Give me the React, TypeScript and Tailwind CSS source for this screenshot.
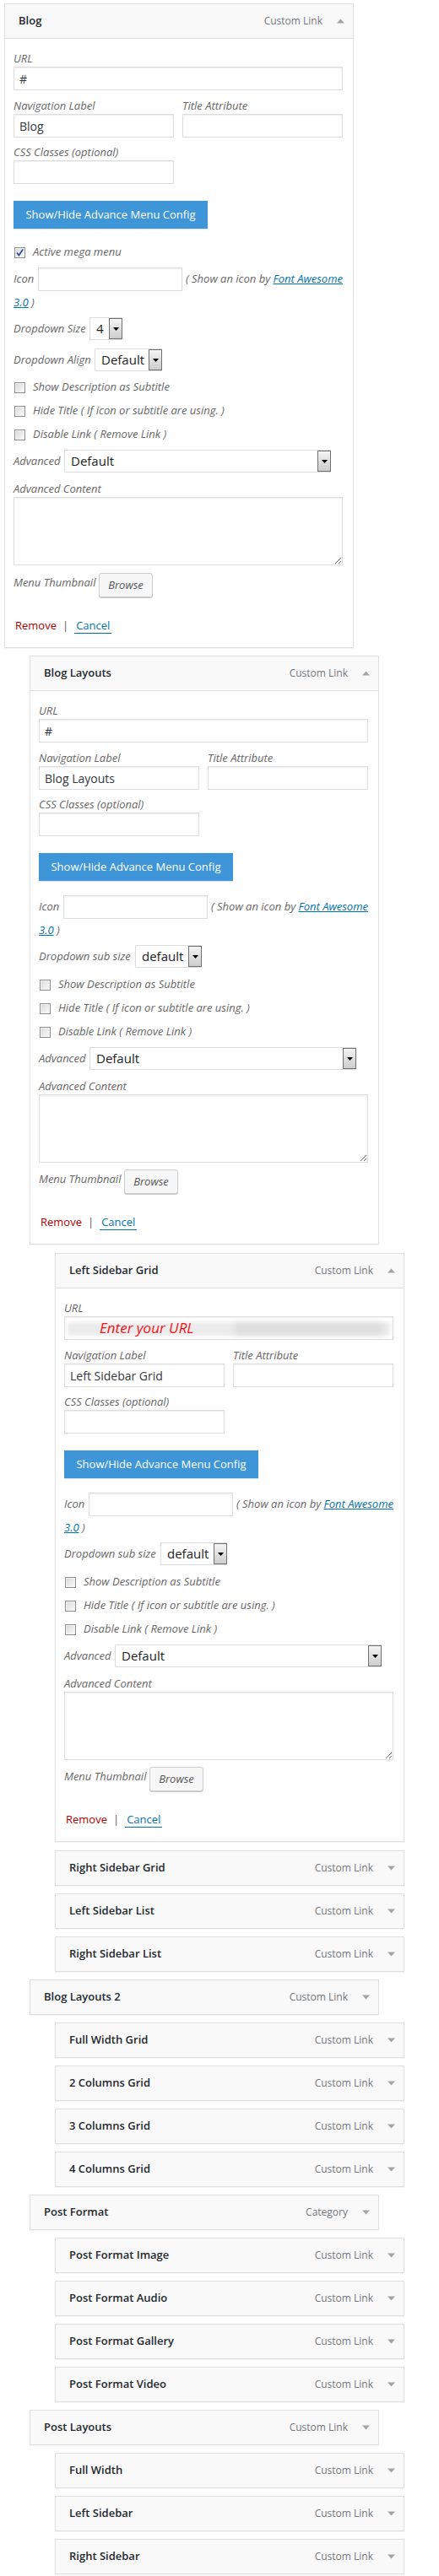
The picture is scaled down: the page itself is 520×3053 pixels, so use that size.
import React from "react";

const ML = ["ml-[5px]", "ml-[35px]", "ml-[65px]"];

function Arrow({ up }: { up?: boolean }) {
  return (
    <svg width="9" height="6" viewBox="0 0 9 6" className="block">
      {up ? <path d="M0 5.5h9L4.5 0.5z" fill="#a0a5aa" /> : <path d="M0 0.5h9L4.5 5.5z" fill="#a0a5aa" />}
    </svg>
  );
}

function Header({ title, type = "Custom Link", up }: { title: string; type?: string; up?: boolean }) {
  return (
    <div className="flex h-[40px] items-center justify-between bg-[#f9f9f9] pl-4 pr-[10px]">
      <span className="text-[13px] font-semibold text-[#23282d]">{title}</span>
      <span className="flex items-center">
        <span className="text-[12px] text-[#72777c]">{type}</span>
        <span className="ml-[17px]">
          <Arrow up={up} />
        </span>
      </span>
    </div>
  );
}

function Label({ children, className = "" }: { children: React.ReactNode; className?: string }) {
  return <div className={`h-[19px] whitespace-nowrap text-[13px] italic leading-[19px] text-[#666] ${className}`}>{children}</div>;
}

function Field({ value, className = "" }: { value?: string; className?: string }) {
  return (
    <div
      className={`flex h-[28px] items-center border border-[#ddd] bg-white px-[6px] text-[14px] text-[#32373c] shadow-[inset_0_1px_2px_rgba(0,0,0,0.07)] ${className}`}
    >
      {value}
    </div>
  );
}

function Select({ value, w }: { value: string; w: string }) {
  return (
    <div className={`flex h-[27px] items-stretch border border-[#ddd] bg-white ${w}`}>
      <span className="flex flex-1 items-center pl-[7px] text-[15px] text-[#222]">{value}</span>
      <span className="-mr-px flex w-[16px] items-center justify-center border border-[#707070] bg-linear-to-b from-[#f4f4f4] to-[#cdcdcd]">
        <svg width="7" height="4" viewBox="0 0 7 4" className="block">
          <path d="M0 0h7L3.5 4z" fill="#000" />
        </svg>
      </span>
    </div>
  );
}

function Check({ checked }: { checked?: boolean }) {
  return (
    <span className="relative block h-[13px] w-[13px] border border-[#8e8f8f] bg-linear-to-br from-[#d9d9d9] to-[#fbfbfb] shadow-[inset_0_0_0_1px_#f3f3f3]">
      {checked && (
        <svg width="13" height="13" viewBox="0 0 13 13" className="absolute -left-px -top-px">
          <path d="M3 6.5L5.4 9.6L10.2 2.6" stroke="#2b4c96" strokeWidth="1.7" fill="none" />
        </svg>
      )}
    </span>
  );
}

function CheckRow({ label, checked, className = "" }: { label: string; checked?: boolean; className?: string }) {
  return (
    <div className={`flex h-[20px] items-center ${className}`}>
      <span className="ml-px">
        <Check checked={checked} />
      </span>
      <span className="ml-[9px] whitespace-nowrap text-[13px] italic text-[#666]">{label}</span>
    </div>
  );
}

function SelectRow({ label, lw, value, w, className = "" }: { label: string; lw: string; value: string; w: string; className?: string }) {
  return (
    <div className={`flex h-[27px] items-center ${className}`}>
      <span className={`whitespace-nowrap text-[13px] italic text-[#666] ${lw}`}>{label}</span>
      <Select value={value} w={w} />
    </div>
  );
}

function UrlSpecial() {
  return (
    <div className="relative h-[28px] w-full border border-[#ddd] bg-white shadow-[inset_0_1px_2px_rgba(0,0,0,0.07)]">
      <div className="absolute left-[3px] right-[3px] top-[6px] h-[16px] bg-[#ebebeb] blur-[2px]" />
      <div className="absolute left-[200px] right-[12px] top-[7px] h-[14px] bg-[#dedede] blur-[3px]" />
      <span className="absolute left-[41px] top-[0px] text-[17px] italic leading-[26px] text-[#f2121c]">Enter your URL</span>
    </div>
  );
}

function Expanded({
  title,
  level,
  navValue,
  main,
  special,
  mb,
}: {
  title: string;
  level: number;
  navValue: string;
  main?: boolean;
  special?: boolean;
  mb: string;
}) {
  return (
    <div className={`${ML[level]} ${mb} w-[414px] border border-[#dfdfdf] bg-white shadow-[0_1px_1px_rgba(0,0,0,0.04)]`}>
      <div className="border-b border-[#dfdfdf]">
        <Header title={title} up />
      </div>
      <div className="pb-[15px] pl-[10px] pr-[12px] pt-[14px]">
        <Label>URL</Label>
        {special ? <UrlSpecial /> : <Field value="#" />}

        <div className="mt-[9px] grid grid-cols-2 gap-x-[10px]">
          <div>
            <Label>Navigation Label</Label>
            <Field value={navValue} />
          </div>
          <div>
            <Label>Title Attribute</Label>
            <Field />
          </div>
        </div>

        <Label className="mt-[8px]">CSS Classes (optional)</Label>
        <Field className="w-[190px]" />

        <div className="mt-[20px] flex h-[33px] w-[230px] items-center justify-center bg-[#3e95d7] text-[13px] text-white shadow-[0_1px_1px_rgba(0,0,0,0.1)]">
          Show/Hide Advance Menu Config
        </div>

        {main && <CheckRow className="mt-[18px]" label="Active mega menu" checked />}

        <div className={`${main ? "mt-[8px]" : "mt-[17px]"} flex h-[28px] items-center whitespace-nowrap`}>
          <span className="w-[29px] text-[13px] italic text-[#666]">Icon</span>
          <Field className="w-[172px]" />
          <span className="ml-[4px] text-[13px] italic text-[#666]">
            ( Show an icon by <span className="text-[#0073aa] underline">Font Awesome</span>
          </span>
        </div>
        <div className="mt-[3px] h-[20px] text-[13px] italic leading-[20px] text-[#666]">
          <span className="text-[#0073aa] underline">3.0</span> )
        </div>

        {main ? (
          <>
            <SelectRow className="mt-[8px]" label="Dropdown Size" lw="w-[90px]" value="4" w="w-[39px]" />
            <SelectRow className="mt-[10px]" label="Dropdown Align" lw="w-[96px]" value="Default" w="w-[80px]" />
          </>
        ) : (
          <SelectRow className="mt-[8px]" label="Dropdown sub size" lw="w-[114px]" value="default" w="w-[79px]" />
        )}

        <CheckRow className={main ? "mt-[9px]" : "mt-[10px]"} label="Show Description as Subtitle" />
        <CheckRow className="mt-[8px]" label="Hide Title ( If icon or subtitle are using. )" />
        <CheckRow className="mt-[8px]" label="Disable Link ( Remove Link )" />

        <SelectRow className="mt-[8px]" label="Advanced" lw="w-[60px]" value="Default" w="w-[316px]" />

        <Label className="mt-[10px]">Advanced Content</Label>
        <textarea
          readOnly
          className="block h-[81px] w-full border border-[#ddd] bg-white shadow-[inset_0_1px_2px_rgba(0,0,0,0.07)] outline-none"
        />

        <div className={`${main ? "mt-[9px]" : "mt-[8px]"} flex items-start`}>
          <span className="mt-[2px] w-[101px] whitespace-nowrap text-[13px] italic leading-[19px] text-[#666]">Menu Thumbnail</span>
          <span className="flex h-[29px] w-[64px] items-center justify-center rounded-[3px] border border-[#ccc] bg-[#f7f7f7] text-[13px] italic text-[#555] shadow-[0_1px_0_#ccc]">
            Browse
          </span>
        </div>

        <div className="mt-[24px] flex h-[20px] items-center pl-[2px] text-[13px]">
          <span className="text-[#a00]">Remove</span>
          <span className="mx-[7px] text-[#555]">|</span>
          <span className="border-b border-[#0073aa] px-[2px] leading-[17px] text-[#0073aa]">Cancel</span>
        </div>
      </div>
    </div>
  );
}

function Collapsed({ title, level, type }: { title: string; level: number; type?: string }) {
  return (
    <div className={`${ML[level]} mb-[9px] w-[414px] border border-[#dfdfdf] shadow-[0_1px_1px_rgba(0,0,0,0.04)]`}>
      <Header title={title} type={type} />
    </div>
  );
}

const ITEMS: { t: string; l: number; type?: string }[] = [
  { t: "Right Sidebar Grid", l: 2 },
  { t: "Left Sidebar List", l: 2 },
  { t: "Right Sidebar List", l: 2 },
  { t: "Blog Layouts 2", l: 1 },
  { t: "Full Width Grid", l: 2 },
  { t: "2 Columns Grid", l: 2 },
  { t: "3 Columns Grid", l: 2 },
  { t: "4 Columns Grid", l: 2 },
  { t: "Post Format", l: 1, type: "Category" },
  { t: "Post Format Image", l: 2 },
  { t: "Post Format Audio", l: 2 },
  { t: "Post Format Gallery", l: 2 },
  { t: "Post Format Video", l: 2 },
  { t: "Post Layouts", l: 1 },
  { t: "Full Width", l: 2 },
  { t: "Left Sidebar", l: 2 },
  { t: "Right Sidebar", l: 2 },
];

export default function App() {
  return (
    <div className="min-h-[3053px] w-[520px] bg-white pt-[4px] font-['Open_Sans',sans-serif]">
      <Expanded title="Blog" level={0} navValue="Blog" main mb="mb-[9px]" />
      <Expanded title="Blog Layouts" level={1} navValue="Blog Layouts" mb="mb-[10px]" />
      <Expanded title="Left Sidebar Grid" level={2} navValue="Left Sidebar Grid" special mb="mb-[10px]" />
      {ITEMS.map((it, i) => (
        <Collapsed key={i} title={it.t} level={it.l} type={it.type} />
      ))}
    </div>
  );
}
